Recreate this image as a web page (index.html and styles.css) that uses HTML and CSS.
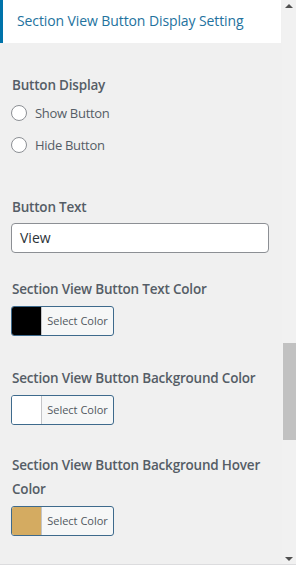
FILE: index.html
```html
<!doctype html>
<html lang="en">
  <head>
    <meta charset="UTF-8" />
    <title>Section View Button Display Setting</title>
    <link rel="stylesheet" href="styles.css">
  </head>
  <body>
    <div class="frame">
      <div class="panel">
        <h3 class="section-title">Section View Button Display Setting</h3>

        <div class="control control-radio">
          <span class="control-label">Button Display</span>
          <label class="radio"><span class="radio-dot"></span>Show Button</label>
          <label class="radio"><span class="radio-dot"></span>Hide Button</label>
        </div>

        <div class="control control-text">
          <span class="control-label">Button Text</span>
          <div class="text-input">View</div>
        </div>

        <div class="control control-color">
          <span class="control-label">Section View Button Text Color</span>
          <button type="button" class="color-button">
            <span class="swatch" style="background: #000000"></span>
            <span class="color-label">Select Color</span>
          </button>
        </div>

        <div class="control control-color">
          <span class="control-label">Section View Button Background Color</span>
          <button type="button" class="color-button">
            <span class="swatch" style="background: #ffffff"></span>
            <span class="color-label">Select Color</span>
          </button>
        </div>

        <div class="control control-color control-last">
          <span class="control-label">Section View Button Background Hover Color</span>
          <button type="button" class="color-button">
            <span class="swatch" style="background: #d4ab61"></span>
            <span class="color-label">Select Color</span>
          </button>
        </div>
      </div>

      <div class="scrollbar">
        <span class="arrow arrow-up"></span>
        <div class="track">
          <div class="thumb"></div>
        </div>
        <span class="arrow arrow-down"></span>
      </div>
    </div>
  </body>
</html>
```

FILE: styles.css
```css
* {
  margin: 0;
  padding: 0;
  box-sizing: border-box;
}

html,
body {
  height: 100%;
  background-color: #f0f0f0;
  font-family: "Open Sans", "Noto Sans", "Liberation Sans", sans-serif;
  color: #50575e;
  overflow: hidden;
}

.frame {
  display: flex;
  height: 565px;
  border-bottom: 1px solid #dcdcde;
}

.panel {
  width: 282px;
  flex: none;
}

.section-title {
  background-color: #ffffff;
  border-left: 3px solid #0073aa;
  width: 281px;
  height: 43px;
  padding: 11px 0 0 14px;
  font-size: 14px;
  font-weight: 400;
  line-height: 20px;
  color: #23729e;
  white-space: nowrap;
  letter-spacing: -0.1px;
}

.control {
  padding: 0 12px 0 11px;
}

.control-label {
  display: block;
  font-size: 13.5px;
  font-weight: 600;
  line-height: 24px;
  letter-spacing: -0.2px;
  color: #555d66;
  padding-left: 1px;
}

.control-radio {
  margin-top: 30px;
}

.radio {
  display: flex;
  align-items: center;
  height: 32px;
  font-size: 13px;
  letter-spacing: -0.3px;
  color: #555d66;
}

.radio-dot {
  width: 16px;
  height: 16px;
  border: 1px solid #8c8f94;
  border-radius: 50%;
  background-color: #ffffff;
  margin-right: 8px;
}

.control-text {
  margin-top: 34px;
}

.control-text .control-label {
  margin-bottom: 4px;
}

.text-input {
  width: 258px;
  height: 30px;
  border: 1px solid #8c8f94;
  border-radius: 4px;
  background-color: #ffffff;
  padding: 0 8px;
  font-size: 14px;
  line-height: 28px;
  color: #2c3338;
}

.control-color {
  margin-top: 24px;
}

.control-color + .control-color {
  margin-top: 30px;
}

.control-color.control-last {
  margin-top: 28px;
}

.control-color .control-label {
  margin-bottom: 5px;
}

.color-button {
  display: flex;
  width: 103px;
  height: 30px;
  border: 1px solid #3e6a8c;
  border-radius: 3px;
  background-color: #f6f7f7;
  overflow: hidden;
  font-family: inherit;
  cursor: pointer;
}

.swatch {
  width: 30px;
  height: 100%;
  border-right: 1px solid #c3c4c7;
}

.color-label {
  flex: 1;
  font-size: 11px;
  line-height: 28px;
  color: #50575e;
  text-align: center;
}

.scrollbar {
  width: 14px;
  flex: none;
  display: flex;
  flex-direction: column;
  align-items: center;
  background-color: #f1f1f1;
}

.arrow {
  width: 0;
  height: 0;
  border-left: 4px solid transparent;
  border-right: 4px solid transparent;
}

.arrow-up {
  border-bottom: 4px solid #505050;
  margin: 4px 0 0;
}

.arrow-down {
  border-top: 4px solid #505050;
  margin: 0 0 3px;
}

.track {
  flex: 1;
  width: 100%;
  padding-top: 335px;
}

.thumb {
  width: 13px;
  margin-left: 1px;
  height: 97px;
  background-color: #c1c1c1;
}
```
